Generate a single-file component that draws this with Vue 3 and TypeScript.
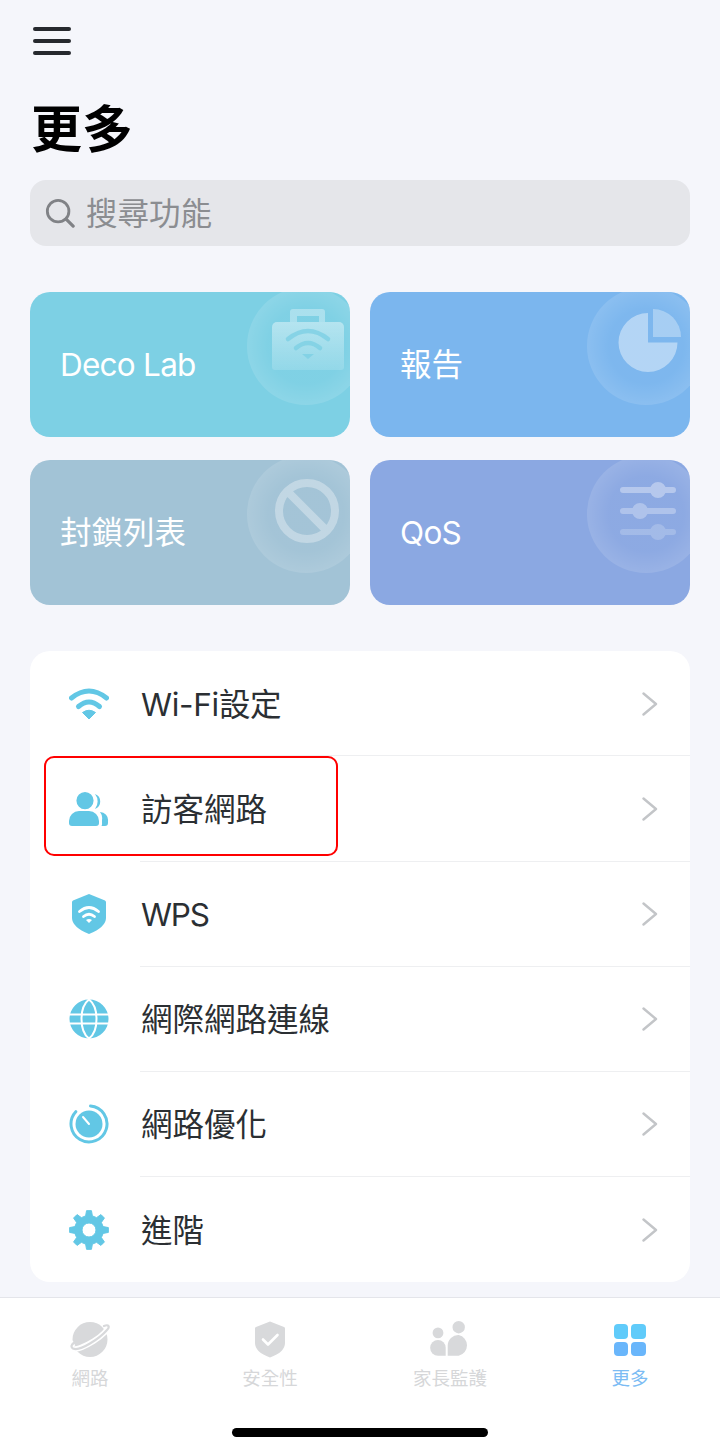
<script setup lang="ts">
type Shape = Record<string, string | number>;

const blue = "#62c7e5";
const grey = "#d8d9db";

// gear outline, computed so the teeth stay even
function gearPath(cx: number, cy: number, outer: number, inner: number, teeth: number): string {
  const pts: string[] = [];
  const step = (Math.PI * 2) / teeth;
  for (let i = 0; i < teeth; i++) {
    const a = i * step - Math.PI / 2;
    const offsets: [number, number][] = [
      [-0.3, inner],
      [-0.16, outer],
      [0.16, outer],
      [0.3, inner],
    ];
    for (const [o, r] of offsets) {
      const t = a + o * step;
      pts.push(`${(cx + r * Math.cos(t)).toFixed(2)} ${(cy + r * Math.sin(t)).toFixed(2)}`);
    }
  }
  return `M${pts.join("L")}Z`;
}

const rows: { label: string; track?: number; icon: Shape[] }[] = [
  {
    label: "Wi-Fi設定",
    track: -0.3,
    icon: [
      { d: "M2.5 14Q20 0 37.5 14", fill: "none", stroke: blue, "stroke-width": 5, "stroke-linecap": "round" },
      { d: "M9.5 22.5Q20 13.5 30.5 22.5", fill: "none", stroke: blue, "stroke-width": 5, "stroke-linecap": "round" },
      { d: "M20 35L13.5 28.5Q20 24 26.5 28.5Z", fill: blue, stroke: blue, "stroke-width": 1, "stroke-linejoin": "round" },
    ],
  },
  {
    label: "訪客網路",
    icon: [
      { d: "M16 3a8.6 8.6 0 1 0 0 17.2a8.6 8.6 0 1 0 0-17.2Z", fill: blue },
      { d: "M0 32a10 10 0 0 1 10-10h10a10 10 0 0 1 10 10v2a3 3 0 0 1-3 3H3a3 3 0 0 1-3-3Z", fill: blue },
      { d: "M26 5a8 8 0 0 1 0 15a12 12 0 0 0 0-15Z", fill: blue },
      { d: "M31 23a8 8 0 0 1 8 9v2a3 3 0 0 1-3 3h-3.5a5 5 0 0 0 .5-3v-3a10 10 0 0 0-2-8Z", fill: blue },
    ],
  },
  {
    label: "WPS",
    track: -1.2,
    icon: [
      { d: "M20 0L36 6.5a2 2 0 0 1 1 1.6V24q0 9-17 16Q3 33 3 24V8.1a2 2 0 0 1 1-1.6Z", fill: blue },
      { d: "M10.5 17.5Q20 9.5 29.5 17.5", fill: "none", stroke: "#fff", "stroke-width": 2.8, "stroke-linecap": "round" },
      { d: "M14.5 22.5Q20 18 25.5 22.5", fill: "none", stroke: "#fff", "stroke-width": 2.8, "stroke-linecap": "round" },
      { d: "M20 29L17 26Q20 24 23 26Z", fill: "#fff" },
    ],
  },
  {
    label: "網際網路連線",
    icon: [
      { d: "M20 .5a19.5 19.5 0 1 0 0 39a19.5 19.5 0 1 0 0-39Z", fill: blue },
      { d: "M20 .5C10 8 10 32 20 39.5C30 32 30 8 20 .5Z", fill: "none", stroke: "#fff", "stroke-width": 2 },
      { d: "M0 15.5H40M0 24.5H40", fill: "none", stroke: "#fff", "stroke-width": 2 },
    ],
  },
  {
    label: "網路優化",
    icon: [
      { d: "M21.5 2A18 18 0 1 1 6.8 7.7", fill: "none", stroke: blue, "stroke-width": 3, "stroke-linecap": "round" },
      { d: "M20 6.5a13.5 13.5 0 1 0 0 27a13.5 13.5 0 1 0 0-27Z", fill: blue },
      { d: "M14 13L20 20", fill: "none", stroke: "#fff", "stroke-width": 2, "stroke-linecap": "round" },
    ],
  },
  {
    label: "進階",
    icon: [
      { d: gearPath(20, 20, 19.5, 14.5, 8) + "M20 13a7 7 0 1 0 0 14a7 7 0 1 0 0-14Z", fill: blue, "fill-rule": "evenodd", stroke: blue, "stroke-width": 1, "stroke-linejoin": "round" },
    ],
  },
];

const tiles: { label: string; tone: string; track?: number; icon: Shape[] }[] = [
  {
    label: "Deco Lab",
    tone: "tone-teal",
    track: -0.75,
    icon: [
      { d: "M19 14V4a3 3 0 0 1 3-3h29a3 3 0 0 1 3 3v10h-6V8H26v6Z", fill: "#fff", opacity: 0.34 },
      { d: "M6 14h62a5 5 0 0 1 5 5v40a3 3 0 0 1-3 3H4a3 3 0 0 1-3-3V19a5 5 0 0 1 5-5Z", fill: "url(#tile-fade)" },
      { d: "M17 31Q37 15 57 31", fill: "none", stroke: "#7dd0e4", "stroke-width": 4.5, "stroke-linecap": "round", opacity: 0.8 },
      { d: "M25 40Q37 30 49 40", fill: "none", stroke: "#7dd0e4", "stroke-width": 4.5, "stroke-linecap": "round", opacity: 0.8 },
      { d: "M37 51L31 46H43Z", fill: "#7dd0e4", opacity: 0.8 },
    ],
  },
  {
    label: "報告",
    tone: "tone-blue",
    icon: [
      { d: "M37 5A29.5 29.5 0 1 0 66.5 34.5H37Z", fill: "#fff", opacity: 0.42 },
      { d: "M42 1A28 28 0 0 1 70 29H42Z", fill: "#fff", opacity: 0.32 },
    ],
  },
  {
    label: "封鎖列表",
    tone: "tone-slate",
    icon: [
      { d: "M36 7a28 28 0 1 1 0 56a28 28 0 1 1 0-56ZM16.2 15.2L55.8 54.8", fill: "none", stroke: "#fff", "stroke-width": 8, opacity: 0.33 },
    ],
  },
  {
    label: "QoS",
    tone: "tone-indigo",
    track: -0.7,
    icon: [
      { d: "M12 11h50a3 3 0 0 1 0 6h-50a3 3 0 0 1 0-6ZM47 6a8 8 0 1 1 0 16a8 8 0 1 1 0-16Z", fill: "#fff", opacity: 0.36 },
      { d: "M12 32h50a3 3 0 0 1 0 6h-50a3 3 0 0 1 0-6ZM29 27a8 8 0 1 1 0 16a8 8 0 1 1 0-16Z", fill: "#fff", opacity: 0.3 },
      { d: "M12 53h50a3 3 0 0 1 0 6h-50a3 3 0 0 1 0-6ZM47 48a8 8 0 1 1 0 16a8 8 0 1 1 0-16Z", fill: "#fff", opacity: 0.2 },
    ],
  },
];

const tabs: { label: string; icon: Shape[] }[] = [
  {
    label: "網路",
    icon: [
      { d: "M20 2a17.5 17.5 0 1 0 0 35a17.5 17.5 0 1 0 0-35Z", fill: grey },
      { d: "M37 6C42 12 8 33 2 28C0 26 2 24 4 23", fill: "none", stroke: "#fff", "stroke-width": 5.5 },
      { d: "M34 6C39 4 40 7 37 10C30 18 10 32 3 28.5C0 26.5 2 24 4.5 22.5", fill: "none", stroke: grey, "stroke-width": 2.2, "stroke-linecap": "round" },
    ],
  },
  {
    label: "安全性",
    icon: [
      { d: "M20 1.5L34 7a1.5 1.5 0 0 1 1 1.4V23q0 9-15 14.5Q5 32 5 23V8.4A1.5 1.5 0 0 1 6 7Z", fill: grey },
      { d: "M13 19.5L18 24.5L27.5 15", fill: "none", stroke: "#fff", "stroke-width": 2.6, "stroke-linecap": "round", "stroke-linejoin": "round" },
    ],
  },
  {
    label: "家長監護",
    icon: [
      { d: "M8 7.5a5.4 5.4 0 1 0 0 10.8a5.4 5.4 0 1 0 0-10.8Z", fill: grey },
      { d: "M8 20a7.7 7.7 0 0 1 7.7 7.7V35.7H8A7.7 7.7 0 0 1 8 20Z", fill: grey },
      { d: "M28.7 1a6.2 6.2 0 1 0 0 12.4a6.2 6.2 0 1 0 0-12.4Z", fill: grey },
      { d: "M28.7 15a10.6 10.6 0 0 1 0 20.7H17.7V25.6A10.6 10.6 0 0 1 28.7 15Z", fill: grey },
    ],
  },
];
</script>

<template>
  <div class="page">
    <main class="content">
      <div class="menu-btn"><span /><span /><span /></div>
      <h1 class="title">更多</h1>

      <div class="search">
        <svg class="search-icon" viewBox="0 0 32 32">
          <circle cx="14" cy="14" r="11.5" fill="none" stroke="#808286" stroke-width="3" />
          <path d="M22.5 22.5L30 30" fill="none" stroke="#808286" stroke-width="3.4" stroke-linecap="round" />
        </svg>
        <span class="search-label">搜尋功能</span>
      </div>

      <section class="tiles">
        <div v-for="t in tiles" :key="t.label" class="tile" :class="t.tone">
          <span class="tile-label" :style="{ letterSpacing: `${t.track ?? 0}px` }">{{ t.label }}</span>
          <div class="tile-glow" />
          <svg class="tile-icon" viewBox="0 0 74 74">
            <defs>
              <linearGradient id="tile-fade" x1="0" y1="0" x2="0" y2="1">
                <stop offset="0" stop-color="#fff" stop-opacity="0.42" />
                <stop offset="1" stop-color="#fff" stop-opacity="0.15" />
              </linearGradient>
            </defs>
            <path v-for="(p, i) in t.icon" :key="i" v-bind="p" />
          </svg>
        </div>
      </section>

      <section class="list">
        <div v-for="r in rows" :key="r.label" class="row">
          <svg class="row-icon" viewBox="0 0 40 40">
            <path v-for="(p, i) in r.icon" :key="i" v-bind="p" />
          </svg>
          <span class="row-label" :style="{ letterSpacing: `${r.track ?? 0}px` }">{{ r.label }}</span>
          <svg class="chevron" viewBox="0 0 16 24">
            <path d="M1.5 1.5L14 12L1.5 22.5" fill="none" stroke="#c3c5c8" stroke-width="2.4" stroke-linecap="round" stroke-linejoin="round" />
          </svg>
        </div>
        <div class="highlight" />
      </section>
    </main>

    <nav class="tabbar">
      <div class="tabs">
        <div v-for="t in tabs" :key="t.label" class="tab">
          <svg class="tab-icon" viewBox="0 0 40 40">
            <path v-for="(p, i) in t.icon" :key="i" v-bind="p" />
          </svg>
          <span>{{ t.label }}</span>
        </div>
        <div class="tab active">
          <div class="grid-icon"><i /><i /><i /><i /></div>
          <span>更多</span>
        </div>
      </div>
      <div class="home-bar" />
    </nav>
  </div>
</template>

<style scoped>
.page {
  width: 720px;
  height: 1452px;
  background: #f5f6fb;
  font-family: Inter, "Noto Sans CJK TC", sans-serif;
  display: flex;
  flex-direction: column;
  overflow: hidden;
}

.content {
  padding: 27px 30px 0;
  flex: 1;
}

.menu-btn {
  display: flex;
  flex-direction: column;
  gap: 8px;
  width: 38px;
  margin-left: 3px;
}

.menu-btn span {
  height: 4px;
  border-radius: 2px;
  background: #26292e;
}

.title {
  margin: 45px 0 20px 1px;
  font-size: 51px;
  line-height: 60px;
  font-weight: 700;
  color: #000;
}

.search {
  height: 66px;
  border-radius: 16px;
  background: #e5e6ea;
  display: flex;
  align-items: center;
  gap: 11px;
  padding-left: 15px;
  color: #8b8d91;
}

.search-label {
  padding-top: 2px;
  font-size: 31.5px;
  line-height: 40px;
}

.search-icon {
  width: 30px;
  height: 30px;
}

.tiles {
  margin-top: 46px;
  display: grid;
  grid-template-columns: 320px 320px;
  grid-auto-rows: 145px;
  gap: 23px 20px;
}

.tile {
  position: relative;
  overflow: hidden;
  border-radius: 20px;
  display: flex;
  align-items: center;
  padding-left: 30px;
}

.tone-teal { background: #7dd0e4; }
.tone-blue { background: #7bb6ee; }
.tone-slate { background: #a2c3d6; }
.tone-indigo { background: #8ba8e2; }

.tile-label {
  padding-top: 1px;
  font-size: 31.5px;
  line-height: 40px;
  color: #fff;
}

.tile-glow {
  position: absolute;
  left: 217px;
  top: -5px;
  width: 118px;
  height: 118px;
  border-radius: 50%;
  background: radial-gradient(circle, rgba(255, 255, 255, 0.02) 45%, rgba(255, 255, 255, 0.24) 100%);
}

.tile-icon {
  position: absolute;
  left: 241px;
  top: 16px;
  width: 74px;
  height: 74px;
}

.list {
  position: relative;
  margin-top: 46px;
  background: #fff;
  border-radius: 20px;
}

.row {
  position: relative;
  box-sizing: border-box;
  height: 105.25px;
  padding: 1.5px 0 0 39px;
  display: flex;
  align-items: center;
}

.row:first-child {
  height: 104.25px;
}

.row:last-of-type {
  height: 106.25px;
}

.row + .row::before {
  content: "";
  position: absolute;
  left: 110px;
  right: 0;
  top: 0;
  height: 1px;
  background: #eeeff1;
}

.row-icon {
  width: 40px;
  height: 40px;
  flex: none;
}

.row-label {
  margin-left: 32px;
  padding-top: 2px;
  font-size: 31.5px;
  line-height: 40px;
  color: #2b2f33;
}

.chevron {
  margin-left: auto;
  margin-right: 32px;
  width: 16px;
  height: 24px;
}

.highlight {
  position: absolute;
  left: 14px;
  top: 105px;
  width: 294px;
  height: 100px;
  box-sizing: border-box;
  border: 2px solid #f00;
  border-radius: 10px;
}

.tabbar {
  background: #fff;
  border-top: 1px solid #e4e5ea;
  padding: 22px 0 15px;
}

.tabs {
  display: grid;
  grid-template-columns: repeat(4, 180px);
}

.tab {
  display: flex;
  flex-direction: column;
  align-items: center;
  gap: 6px;
  font-size: 18.5px;
  line-height: 24px;
  color: #d6d7d9;
}

.tab.active {
  color: #7cbcf4;
}

.tab-icon {
  width: 40px;
  height: 40px;
}

.grid-icon {
  width: 32px;
  height: 40px;
  display: grid;
  grid-template-columns: 14.4px 14.4px;
  grid-auto-rows: 14.4px;
  gap: 3px;
  align-content: center;
}

.grid-icon i {
  border-radius: 4px;
  background: #60cbfa;
}

.grid-icon i:nth-child(n + 3) {
  background: #69b6fb;
}

.home-bar {
  width: 256px;
  height: 9px;
  margin: 38px auto 0;
  border-radius: 5px;
  background: #000;
}
</style>
